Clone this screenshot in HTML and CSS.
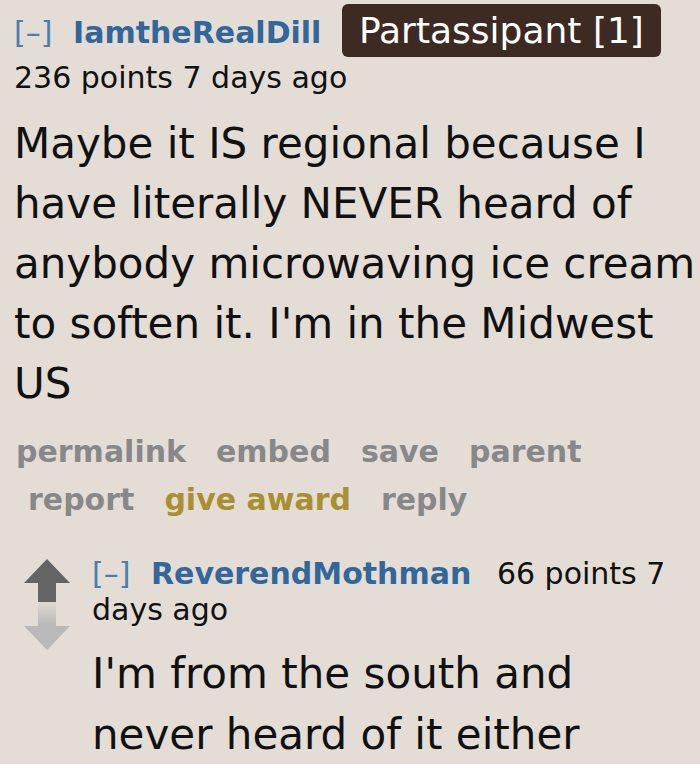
FILE: index.html
```html
<!DOCTYPE html>
<html lang="en">
<head>
	<meta charset="UTF-8">
	<meta name="viewport" content="width=device-width, initial-scale=1">
	<title>Comment thread</title>
	<link rel="stylesheet" href="styles.css">
</head>
<body>
	<div class="comment">
		<p class="tagline">
			<a href="#" class="expand">[–]</a>
			<a href="#" class="author">IamtheRealDill</a>
			<span class="flair">Partassipant [1]</span>
			<span class="score">236 points</span> <time>7 days ago</time>
		</p>

		<div class="md">
			<p>Maybe it IS regional because I have literally NEVER heard of anybody microwaving ice cream to soften it. I'm in the Midwest US</p>
		</div>

		<ul class="buttons">
			<li><a href="#">permalink</a></li>
			<li><a href="#">embed</a></li>
			<li><a href="#">save</a></li>
			<li><a href="#">parent</a></li>
			<li class="report"><a href="#">report</a></li>
			<li><a href="#" class="give-award">give award</a></li>
			<li><a href="#">reply</a></li>
		</ul>

		<div class="child">
			<div class="midcol">
				<svg class="arrow" width="46" height="43" viewBox="0 0 46 43">
					<polygon points="23,0 46,24 0,24" fill="#646464"/>
					<rect x="14" y="24" width="18" height="19" fill="#646464"/>
				</svg>
				<svg class="arrow" width="46" height="48" viewBox="0 0 46 48">
					<defs>
						<linearGradient id="down-stem" x1="0" y1="0" x2="0" y2="1">
							<stop offset="0" stop-color="#dedad4"/>
							<stop offset="1" stop-color="#b7b7b7"/>
						</linearGradient>
					</defs>
					<rect x="14" y="0" width="18" height="24" fill="url(#down-stem)"/>
					<polygon points="0,24 46,24 23,48" fill="#b9b9b9"/>
				</svg>
			</div>
			<div class="entry">
				<p class="tagline">
					<a href="#" class="expand">[–]</a>
					<a href="#" class="author author-wide">ReverendMothman</a>
					<span class="score">66 points</span> <time>7 days ago</time>
				</p>
				<div class="md">
					<p>I'm from the south and never heard of it either</p>
				</div>
			</div>
		</div>
	</div>
</body>
</html>
```

FILE: styles.css
```css
/* Сброс отступов */
* {
	box-sizing: border-box;
	margin: 0;
	padding: 0;
}

body {
	font-family: "DejaVu Sans", Verdana, sans-serif;
	background: #e3ddd6;
	color: #111;
	overflow: hidden;
}

a {
	text-decoration: none;
}

.comment {
	padding: 4px 0 0 14px;
}

.tagline {
	font-size: 30px;
	line-height: 36px;
}

.expand {
	color: #4a7db0;
	margin-right: 11px;
}

.author {
	color: #336699;
	font-weight: bold;
	margin-right: 11px;
}

.author-wide {
	margin-right: 16px;
}

.flair {
	display: inline-block;
	background: #3d2a22;
	color: #fff;
	font-size: 36px;
	line-height: 43px;
	padding: 5px 17px;
	margin-bottom: 3px;
	border-radius: 6px;
}

.md {
	font-size: 42px;
	line-height: 60px;
	margin-top: 18px;
}

.buttons {
	list-style: none;
	display: flex;
	flex-wrap: wrap;
	column-gap: 30px;
	margin-top: 14px;
	padding-left: 2px;
	font-size: 30px;
	line-height: 48px;
	font-weight: bold;
}

.buttons a {
	color: #888;
}

.buttons .report {
	margin-left: 12px;
}

.buttons .give-award {
	color: #a88f31;
}

/* Вложенный ответ */
.child {
	display: flex;
	gap: 22px;
	margin: 32px 0 0 10px;
}

.midcol {
	display: flex;
	flex-direction: column;
	flex-shrink: 0;
	padding-top: 3px;
}

.arrow {
	display: block;
}

.entry {
	flex: 1;
}

.entry .md {
	margin-top: 15px;
	line-height: 61px;
}
```
